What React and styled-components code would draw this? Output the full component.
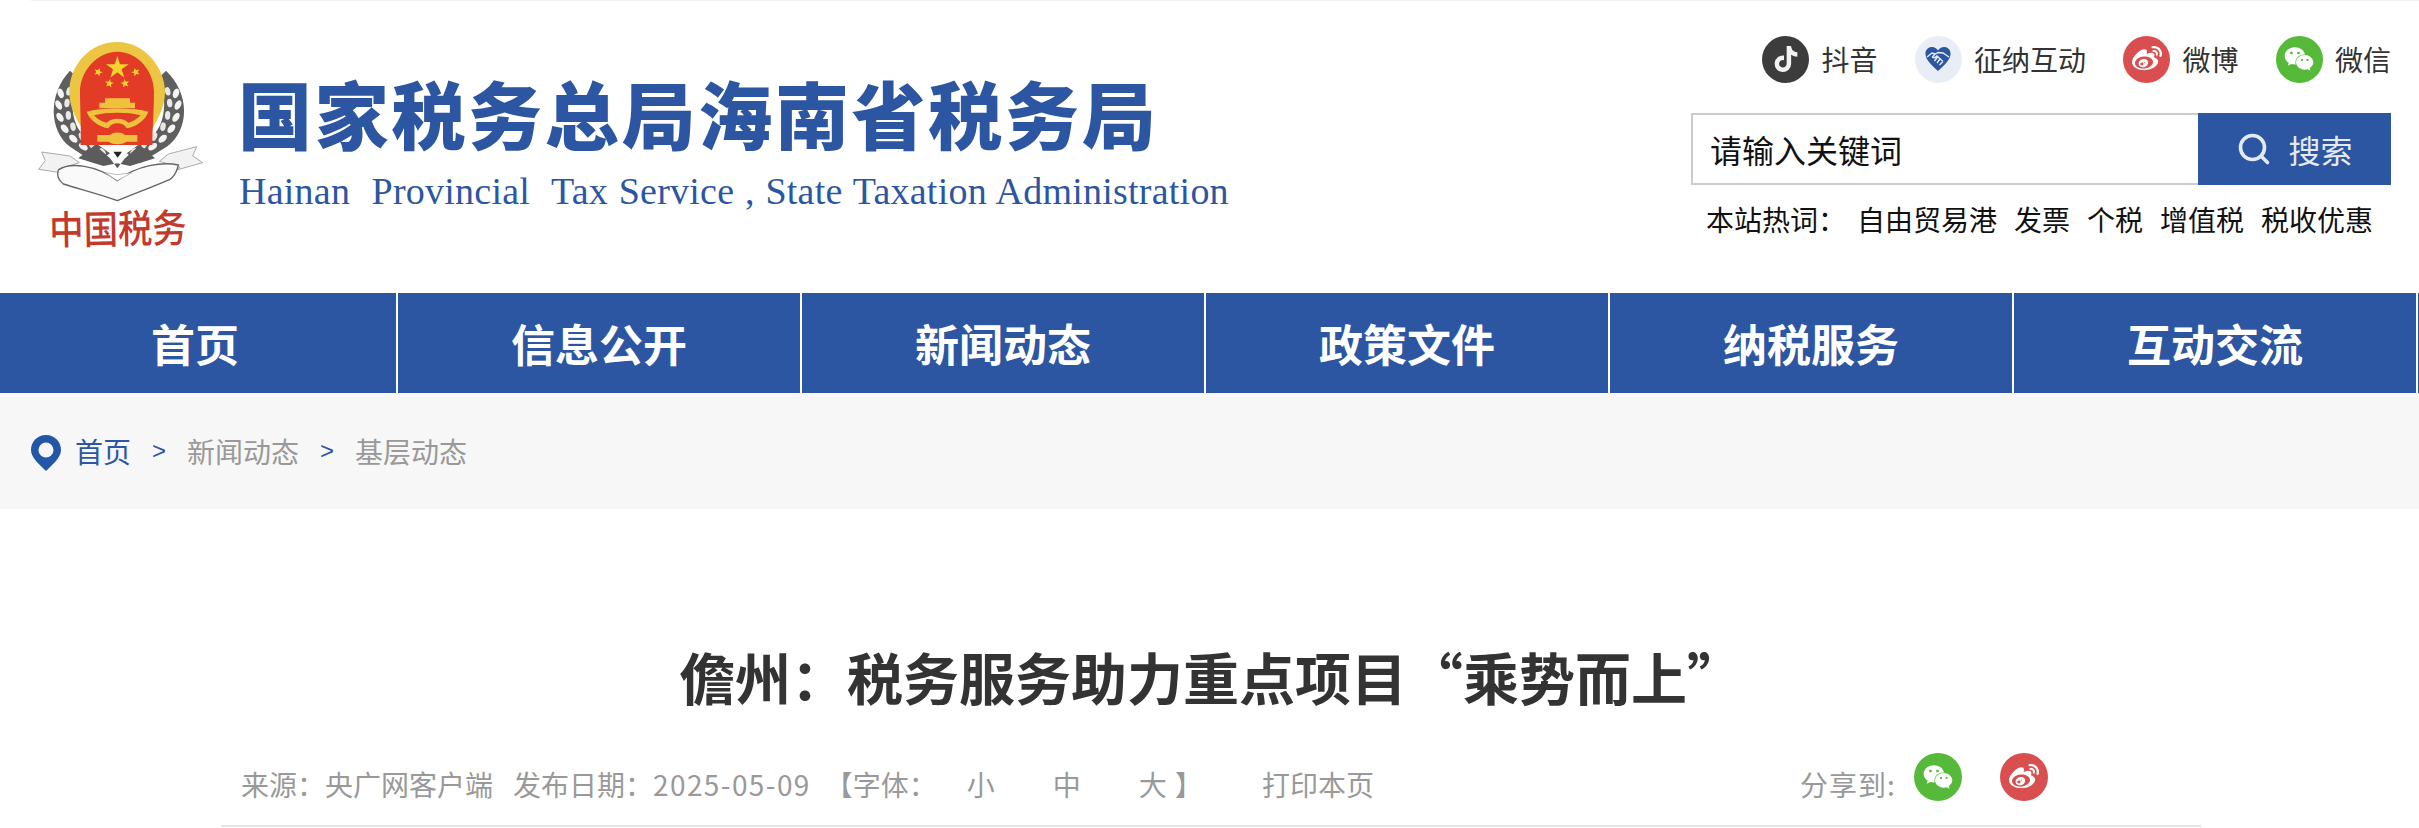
import React from "react";
import styled, { createGlobalStyle } from "styled-components";
import { FaTiktok, FaWeixin, FaWeibo } from "react-icons/fa";
import { Search } from "lucide-react";

const CJK = `"Noto Sans CJK SC", "Noto Sans", sans-serif`;
const BLUE = "#2c56a1";

const Global = createGlobalStyle`
  html, body { margin: 0; padding: 0; background: #fff; overflow: hidden; }
  body { font-family: ${CJK}; }
  * { box-sizing: border-box; }
`;

const Page = styled.div`
  width: 2419px;
  height: 828px;
  overflow: hidden;
`;
const TopRule = styled.div`
  height: 1px;
  margin-left: 31px;
  background: #f0f0f0;
`;
const Header = styled.header`
  height: 292px;
  display: flex;
  justify-content: space-between;
  padding: 0 28px 0 20px;
`;
const Brand = styled.div`
  display: flex;
  align-items: flex-start;
  padding-top: 29px;
`;
const BrandText = styled.div`
  margin-left: 18px;
  padding-top: 40px;
  color: ${BLUE};
`;
const BrandName = styled.div`
  font-size: 74px;
  font-weight: 900;
  line-height: 84px;
  letter-spacing: 2.7px;
  white-space: nowrap;
`;
const BrandEn = styled.div`
  font-family: "Liberation Serif", serif;
  font-size: 38px;
  line-height: 40px;
  margin-top: 17px;
  margin-left: 1px;
  letter-spacing: 0.23px;
  word-spacing: 1px;
  white-space: nowrap;
`;
const Tools = styled.div`
  width: 700px;
  padding-top: 34px;
`;
const Socials = styled.div`
  display: flex;
  justify-content: flex-end;
  gap: 37.5px;
  height: 48px;
`;
const Social = styled.div`
  display: flex;
  align-items: center;
  gap: 12px;
  font-size: 28px;
  color: #333;
  white-space: nowrap;
`;
const Round = styled.span`
  width: ${(p) => p.$size || 47}px;
  height: ${(p) => p.$size || 47}px;
  border-radius: 50%;
  background: ${(p) => p.$bg};
  color: ${(p) => p.$fg || "#fff"};
  display: inline-flex;
  align-items: center;
  justify-content: center;
  flex: none;
`;
const SearchBar = styled.div`
  display: flex;
  height: 72px;
  margin-top: 30px;
`;
const Input = styled.div`
  flex: 1;
  border: 2px solid #ccc;
  border-right: 0;
  padding-left: 17px;
  display: flex;
  align-items: center;
  font-size: 32px;
  color: #111;
`;
const SearchBtn = styled.div`
  width: 193px;
  background: ${BLUE};
  color: #e4e9f2;
  font-size: 32px;
  display: flex;
  align-items: center;
  justify-content: center;
  gap: 16px;
`;
const Hot = styled.div`
  display: flex;
  align-items: center;
  margin-top: 14px;
  padding-left: 15px;
  font-size: 28px;
  line-height: 40px;
  color: #111;
  white-space: nowrap;
`;
const HotLabel = styled.span`
  margin-right: 2px;
  width: 149px;
`;
const HotWord = styled.span`
  margin-right: 17px;
`;
const Nav = styled.nav`
  height: 100px;
  margin-left: -6px;
  width: 2425px;
  display: grid;
  grid-template-columns: repeat(6, 404px);
  background: ${BLUE};
`;
const NavItem = styled.div`
  display: flex;
  align-items: center;
  justify-content: center;
  border-right: 2px solid #fff;
  color: #fff;
  font-size: 44px;
  font-weight: 700;
`;
const Crumbs = styled.div`
  height: 116px;
  background: #f7f7f7;
  display: flex;
  align-items: center;
  padding-left: 30px;
  font-size: 28px;
  color: #999;
`;
const Pin = styled.svg`
  width: 32px;
  height: 38px;
  margin-right: 13px;
  margin-top: 4px;
`;
const CrumbHome = styled.span`
  color: ${BLUE};
`;
const CrumbSep = styled.span`
  color: ${BLUE};
  font-family: "Liberation Sans", sans-serif;
  font-size: 24px;
  margin: 0 21px;
`;
const Article = styled.main`
  width: 1980px;
  margin-left: 221px;
`;
const Title = styled.h1`
  margin: 0;
  padding-top: 125px;
  font-size: 56px;
  line-height: 84px;
  font-weight: 700;
  color: #333;
  text-align: center;
  white-space: nowrap;
`;
const Meta = styled.div`
  display: flex;
  align-items: center;
  height: 93px;
  margin-top: 16px;
  padding: 8px 20px 0;
  border-bottom: 2px solid #e4e4e4;
  font-size: 28px;
  color: #999;
  white-space: nowrap;
`;
const MetaItem = styled.span`
  margin-right: ${(p) => p.$gap || 0}px;
`;
const DateText = styled.span`
  letter-spacing: 1.4px;
`;
const Share = styled.div`
  align-self: flex-start;
  margin-top: 11px;
  display: flex;
  align-items: flex-start;
  gap: 38px;
  margin-left: 426px;
`;
const ShareLabel = styled.span`
  margin-right: -20px;
  padding-top: 11px;
  line-height: 40px;
  letter-spacing: 1px;
`;

const leafL = [[122,190],[116,225],[120,262],[134,296],[160,326],[190,350],[222,372]];
const leafR = [[468,190],[474,225],[468,262],[454,296],[428,326],[398,350],[366,372]];

const Emblem = () => (
  <svg width="200" height="230" viewBox="0 0 600 690" style={{ flex: "none" }}>
    <defs>
      <filter id="soft"><feGaussianBlur stdDeviation="1.5" /></filter>
    </defs>
    <g filter="url(#soft)">
      <path d="M150 122 C85 190 85 300 150 350 L225 400 L270 370 L185 310 C150 270 150 190 175 145Z" fill="#5e5e5e" />
      <path d="M438 122 C510 190 510 300 440 350 L360 400 L320 370 L405 310 C440 270 440 190 415 145Z" fill="#5e5e5e" />
      {leafL.map(([x,y],i)=>(
        <g key={"l"+i}>
          <ellipse cx={x} cy={y} rx="9" ry="15" fill="#f4f4f4" transform={`rotate(${-20 - i*7} ${x} ${y})`} />
          <ellipse cx={x+25} cy={y-6} rx="8" ry="13" fill="#e8e8e8" transform={`rotate(${15 - i*9} ${x+25} ${y-6})`} />
        </g>
      ))}
      {leafR.map(([x,y],i)=>(
        <g key={"r"+i}>
          <ellipse cx={x} cy={y} rx="9" ry="15" fill="#f4f4f4" transform={`rotate(${20 + i*7} ${x} ${y})`} />
          <ellipse cx={x-25} cy={y-6} rx="8" ry="13" fill="#e8e8e8" transform={`rotate(${-15 + i*9} ${x-25} ${y-6})`} />
        </g>
      ))}
      <path d="M65 366 L150 378 L178 398 L115 418 L122 428 L56 418 L76 392Z" fill="#f2f2f2" stroke="#9a9a9a" strokeWidth="2.5" />
      <path d="M530 350 L445 372 L418 394 L480 412 L470 420 L548 398 L518 378Z" fill="#f2f2f2" stroke="#9a9a9a" strokeWidth="2.5" />
      <path d="M115 420 C150 395 230 405 292 452 C350 405 430 395 475 405 C470 420 470 435 450 448 C390 474 340 492 292 512 C240 492 180 478 130 462 C115 450 110 435 115 420Z" fill="#fafafa" stroke="#666" strokeWidth="4" />
      <path d="M292 452 L255 428 L292 434 L335 428Z" fill="#fff" stroke="#999" strokeWidth="2" />
      <path d="M225 345 L270 385 L292 415 L315 385 L360 345 L405 385 L330 408 L292 400 L250 408 L175 385Z" fill="#5c5c5c" />
      <path d="M280 365 h26 l-13 18Z" fill="#222" />
      <path d="M292 36 C375 36 435 115 435 185 C435 235 412 265 398 295 L186 295 C165 258 148 230 148 185 C148 110 205 36 292 36Z" fill="#ecc642" />
      <path d="M292 65 C355 65 402 125 402 185 C402 240 397 300 397 345 L182 345 C184 300 180 235 180 185 C180 125 230 65 292 65Z" fill="#e23a28" />
      <polygon points="292,78 300,103 326,103 305,118 313,143 292,127 271,143 279,118 258,103 284,103" fill="#f6d32d" />
      {[[235,126],[347,126],[268,160],[315,160]].map(([x,y],i)=>(
        <polygon key={i} transform={`translate(${x} ${y}) rotate(${[20,-20,10,-10][i]})`} points="0,-13 3.5,-4 13,-4 5.5,2 8,11 0,6 -8,11 -5.5,2 -13,-4 -3.5,-4" fill="#f6d32d" />
      ))}
      <path d="M255 205 H330 V218 H345 V235 H238 V218 H255Z" fill="#eec23c" />
      <path d="M200 245 C240 232 345 232 385 245 C378 270 345 292 320 295 C310 275 275 275 265 295 C240 292 208 270 200 245Z" fill="#eec23c" />
      <path d="M222 256 C260 246 325 246 362 256 C350 268 335 276 325 278 C310 262 275 262 260 278 C248 276 232 268 222 256Z" fill="#e23a28" />
      <path d="M232 315 H270 C280 305 305 305 315 315 H352 V335 H320 C305 345 280 345 265 335 H232Z" fill="#eec23c" />
    </g>
    <text x="88" y="640" fontFamily={CJK} fontWeight="500" fontSize="118" fill="#c23a2e" textLength="412" lengthAdjust="spacingAndGlyphs" transform="rotate(-1 290 600)">中国税务</text>
  </svg>
);

const DealHeart = () => (
  <svg width="28" height="26" viewBox="0 0 28 26">
    <path d="M14 25 C10 21 2 15 1.5 8.5 C1 3.5 4.5 1 8 1 C10.5 1 12.8 2.2 14 4.5 C15.2 2.2 17.5 1 20 1 C23.5 1 27 3.5 26.5 8.5 C26 15 18 21 14 25Z" fill={BLUE} />
    <path d="M3 11 L8 7 L11.5 8 L14 6.5 L19 7 L25 11 M11 8 L8.5 11 C10 12.5 11.5 11.5 13 10 L19 15.5 M16 13 L13 17 M13.5 11 L10.5 15 M19 15.5 L15.5 19" stroke="#e8edf6" strokeWidth="1.4" fill="none" />
  </svg>
);

const PinIcon = () => (
  <Pin viewBox="0 0 32 38">
    <path d="M16 1 C25 1 31 8 31 16 C31 24 22 31 16 37 C10 31 1 24 1 16 C1 8 7 1 16 1Z" fill="#2256a6" />
    <circle cx="16" cy="16" r="7.5" fill="#f4f6fa" />
  </Pin>
);

const navs = ["首页", "信息公开", "新闻动态", "政策文件", "纳税服务", "互动交流"];
const hot = ["自由贸易港", "发票", "个税", "增值税", "税收优惠"];

export default function App() {
  return (
    <Page>
      <Global />
      <TopRule />
      <Header>
        <Brand>
          <Emblem />
          <BrandText>
            <BrandName>国家税务总局海南省税务局</BrandName>
            <BrandEn>Hainan{"\u00a0 "}Provincial{"\u00a0 "}Tax Service , State Taxation Administration</BrandEn>
          </BrandText>
        </Brand>
        <Tools>
          <Socials>
            <Social><Round $bg="#3c3c3c"><FaTiktok size={26} color="#f2f2f2" /></Round>抖音</Social>
            <Social><Round $bg="#e8edf6"><DealHeart /></Round>征纳互动</Social>
            <Social><Round $bg="#d94f4f"><FaWeibo size={30} /></Round>微博</Social>
            <Social><Round $bg="#56b93a"><FaWeixin size={30} /></Round>微信</Social>
          </Socials>
          <SearchBar>
            <Input>请输入关键词</Input>
            <SearchBtn><Search size={36} strokeWidth={2.4} />搜索</SearchBtn>
          </SearchBar>
          <Hot>
            <HotLabel>本站热词：</HotLabel>
            {hot.map((h) => <HotWord key={h}>{h}</HotWord>)}
          </Hot>
        </Tools>
      </Header>
      <Nav>{navs.map((n) => <NavItem key={n}>{n}</NavItem>)}</Nav>
      <Crumbs>
        <PinIcon />
        <CrumbHome>首页</CrumbHome>
        <CrumbSep>&gt;</CrumbSep>
        <span>新闻动态</span>
        <CrumbSep>&gt;</CrumbSep>
        <span>基层动态</span>
      </Crumbs>
      <Article>
        <Title>儋州：税务服务助力重点项目“乘势而上”</Title>
        <Meta>
          <MetaItem $gap={20}>来源：央广网客户端</MetaItem>
          <MetaItem $gap={14}>发布日期：<DateText>2025-05-09</DateText></MetaItem>
          <MetaItem $gap={30}>【字体：</MetaItem>
          <MetaItem $gap={58}>小</MetaItem>
          <MetaItem $gap={58}>中</MetaItem>
          <MetaItem $gap={8}>大</MetaItem>
          <MetaItem $gap={59}>】</MetaItem>
          <MetaItem>打印本页</MetaItem>
          <Share>
            <ShareLabel>分享到:</ShareLabel>
            <Round $bg="#56b93a" $size={48}><FaWeixin size={30} /></Round>
            <Round $bg="#d94f4f" $size={48}><FaWeibo size={30} /></Round>
          </Share>
        </Meta>
      </Article>
    </Page>
  );
}
